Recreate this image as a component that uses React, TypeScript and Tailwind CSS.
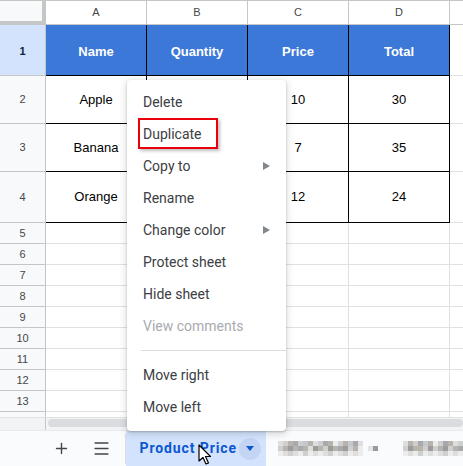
import React from 'react';
import { Plus, Menu as MenuIcon } from 'lucide-react';

const rows = [
  { n: '1', h: 'h-[51px]', cells: ['Name', 'Quantity', 'Price', 'Total'], head: true },
  { n: '2', h: 'h-[48px]', cells: ['Apple', '', '10', '30'] },
  { n: '3', h: 'h-[48px]', cells: ['Banana', '', '7', '35'] },
  { n: '4', h: 'h-[51px]', cells: ['Orange', '', '12', '24'] },
];

const emptyRows = ['5', '6', '7', '8', '9', '10', '11', '12', '13'];

const menuItems = [
  { label: 'Delete' },
  { label: 'Duplicate', boxed: true },
  { label: 'Copy to', sub: true },
  { label: 'Rename' },
  { label: 'Change color', sub: true },
  { label: 'Protect sheet' },
  { label: 'Hide sheet' },
  { label: 'View comments', disabled: true },
];

// pixelated (blurred) tab names
const palette = [
  'bg-[#cfcfcf]',
  'bg-[#b9b3ad]',
  'bg-[#a8a9ad]',
  'bg-[#dedede]',
  'bg-[#c3c8ce]',
  'bg-[#ececec]',
  'bg-[#9c9c9c]',
];
const mosaicA = [
  [3, 0, 1, 2, 0, 4, 1, 3, 0, 2, 1, 5, 0, 1, 4, 2, 3],
  [0, 1, 6, 1, 2, 1, 3, 6, 1, 0, 6, 1, 2, 6, 0, 1, 5],
  [5, 3, 0, 3, 5, 0, 5, 3, 5, 3, 0, 5, 3, 0, 5, 3, 5],
];
const mosaicB = [
  [3, 1, 0, 2, 4, 1, 5, 0, 2, 1, 3, 0],
  [0, 6, 1, 1, 0, 6, 0, 1, 6, 0, 1, 2],
  [5, 3, 5, 0, 5, 3, 5, 3, 0, 5, 3, 5],
];

function Mosaic({ grid }: { grid: number[][] }) {
  return (
    <div className="flex flex-col">
      {grid.map((r, i) => (
        <div key={i} className="flex">
          {r.map((c, j) => (
            <div key={j} className={`w-[5px] h-[5px] ${palette[c]}`} />
          ))}
        </div>
      ))}
    </div>
  );
}

function SubArrow() {
  return (
    <svg width="7" height="8" viewBox="0 0 7 8" className="ml-auto">
      <polygon points="0,0 7,4 0,8" fill="#80868b" />
    </svg>
  );
}

export default function App() {
  return (
    <div className="relative w-[463px] h-[466px] overflow-hidden bg-white font-['Liberation_Sans',Arial,sans-serif]">
      {/* column headers */}
      <div className="flex h-[25px] border-t border-b border-[#c4c7c5] text-[11px] text-[#444746]">
        <div className="w-[46px] shrink-0 bg-[#f8f9fa] border-r-4 border-b-[3px] border-[#c4c7c5]" />
        {['A', 'B', 'C', 'D'].map((l) => (
          <div key={l} className="w-[101px] shrink-0 border-r border-[#c4c7c5] flex items-center justify-center">
            {l}
          </div>
        ))}
        <div className="flex-1" />
      </div>

      {/* table rows */}
      {rows.map((r) => (
        <div key={r.n} className={`flex ${r.h}`}>
          <div
            className={`w-[46px] shrink-0 border-r border-b border-[#c4c7c5] flex items-center justify-center text-[11px] ${
              r.head ? 'bg-[#d3e3fd] font-bold text-[#0b1f3f] pt-[2px]' : 'bg-[#f8f9fa] text-[#444746]'
            }`}
          >
            {r.n}
          </div>
          {r.cells.map((c, i) => (
            <div
              key={i}
              className={`w-[101px] shrink-0 border-r border-b border-black flex items-center justify-center text-[13px] ${
                r.head ? 'bg-[#3c78d8] text-white font-bold pt-[3px]' : 'text-black'
              }`}
            >
              {c}
            </div>
          ))}
          <div className="flex-1 border-b border-[#e1e1e1]" />
        </div>
      ))}

      {emptyRows.map((n) => (
        <div key={n} className="flex h-[21px]">
          <div className="w-[46px] shrink-0 bg-[#f8f9fa] border-r border-b border-[#c4c7c5] flex items-center justify-center text-[11px] text-[#444746]">
            {n}
          </div>
          {[0, 1, 2, 3].map((i) => (
            <div key={i} className="w-[101px] shrink-0 border-r border-b border-[#e1e1e1]" />
          ))}
          <div className="flex-1 border-b border-[#e1e1e1]" />
        </div>
      ))}

      {/* partial row */}
      <div className="flex h-[5px]">
        <div className="w-[46px] shrink-0 bg-[#f8f9fa] border-r border-[#c4c7c5]" />
        {[0, 1, 2, 3].map((i) => (
          <div key={i} className="w-[101px] shrink-0 border-r border-[#e1e1e1]" />
        ))}
      </div>

      {/* horizontal scrollbar */}
      <div className="flex h-[13px] bg-[#f1f3f4] border-t border-[#e1e1e1]">
        <div className="w-[46px] shrink-0 border-r border-[#c4c7c5]" />
        <div className="flex-1 pl-[2px] pt-[1px]">
          <div className="h-[8px] rounded-full bg-[#dadce0]" />
        </div>
      </div>

      {/* sheet tabs bar */}
      <div className="flex h-[36px] items-center bg-[#f9fbfd] border-t border-[#e8eaed]">
        <div className="ml-[52px] w-[20px] flex justify-center text-[#444746]">
          <Plus size={17} strokeWidth={2} />
        </div>
        <div className="ml-[20px] w-[20px] flex justify-center text-[#444746]">
          <MenuIcon size={19} strokeWidth={2} />
        </div>
        <div className="ml-[13px] w-px h-[30px] bg-[#dadce0]" />
        <div className="ml-[1px] w-[141px] h-full bg-[#d3e3fd] flex items-center pl-[13px] pr-[5px]">
          <span className="font-['Roboto',sans-serif] font-bold text-[14px] tracking-[0.9px] text-[#0b57d0]">
            Product Price
          </span>
          <div className="ml-auto w-[22px] h-[22px] rounded-full bg-[#c3d5f3] flex items-center justify-center">
            <svg width="8" height="5" viewBox="0 0 8 5">
              <polygon points="0,0 8,0 4,5" fill="#0b57d0" />
            </svg>
          </div>
        </div>
        <div className="ml-[12px] flex items-center">
          <Mosaic grid={mosaicA} />
          <div className="ml-[5px] flex">
            <div className="w-[5px] h-[5px] bg-[#e4e4e4]" />
            <div className="w-[5px] h-[5px] bg-[#9a9a9a]" />
          </div>
          <div className="ml-[25px]">
            <Mosaic grid={mosaicB} />
          </div>
        </div>
      </div>

      {/* context menu */}
      <div className="absolute left-[127px] top-[80px] w-[159px] h-[351px] bg-white rounded-[4px] py-[6px] shadow-[0_2px_6px_2px_rgba(60,64,67,0.15),0_1px_2px_rgba(60,64,67,0.3)] font-['Roboto',sans-serif] text-[14px]">
        {menuItems.map((m) => (
          <div
            key={m.label}
            className={`relative h-[32px] flex items-center pl-[16px] pr-[16px] ${
              m.disabled ? 'text-[#a8abaf]' : 'text-[#3c4043]'
            }`}
          >
            {m.label}
            {m.sub && <SubArrow />}
            {m.boxed && (
              <div className="absolute left-[11px] top-[0px] w-[80px] h-[31px] border-2 border-[#e8000b] shadow-[2px_2px_3px_rgba(0,0,0,0.25)]" />
            )}
          </div>
        ))}
        <div className="h-[17px] flex items-center pl-[14px]">
          <div className="w-full h-px bg-[#dadce0]" />
        </div>
        {['Move right', 'Move left'].map((l) => (
          <div key={l} className="h-[32px] flex items-center pl-[16px] text-[#3c4043]">
            {l}
          </div>
        ))}
      </div>

      {/* mouse pointer */}
      <svg className="absolute left-[198px] top-[444px]" width="14" height="22" viewBox="0 0 14 22">
        <path d="M1 1 L1 17 L5 13.5 L8 20 L10.5 19 L7.5 12.5 L12.5 12.5 Z" fill="white" stroke="black" strokeWidth="1.2" strokeLinejoin="round" />
      </svg>
    </div>
  );
}
